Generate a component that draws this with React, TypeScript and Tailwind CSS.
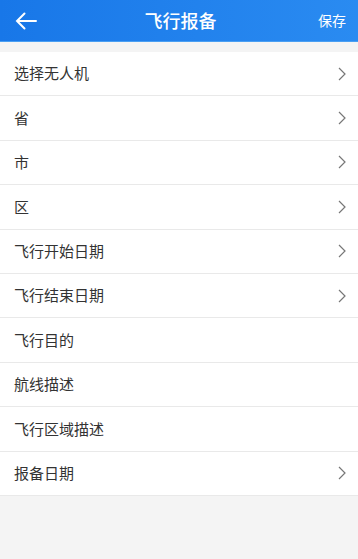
const rows = [
  { label: "选择无人机", arrow: true },
  { label: "省", arrow: true },
  { label: "市", arrow: true },
  { label: "区", arrow: true },
  { label: "飞行开始日期", arrow: true },
  { label: "飞行结束日期", arrow: true },
  { label: "飞行目的", arrow: false },
  { label: "航线描述", arrow: false },
  { label: "飞行区域描述", arrow: false },
  { label: "报备日期", arrow: true },
];

function Chevron() {
  return (
    <svg width="8" height="14" viewBox="0 0 8 14" fill="none">
      <path d="M1 1l6 6-6 6" stroke="#777" strokeWidth="1.2" strokeLinejoin="miter" />
    </svg>
  );
}

export default function App() {
  return (
    <div
      className="flex h-[559px] w-[358px] flex-col bg-[#f4f4f4]"
      style={{ fontFamily: '"Noto Sans CJK SC", "Noto Sans", sans-serif' }}
    >
      <header className="grid h-[42px] shrink-0 grid-cols-[1fr_auto_1fr] items-center border-b border-[#4a9ff2] bg-[linear-gradient(90deg,#1877e8_0%,#2a8bf1_100%)] pl-[15px] pr-[12px] text-white">
        <svg width="22" height="18" viewBox="0 0 22 18" fill="none">
          <path d="M21 9H2M9.5 1.5L2 9l7.5 7.5" stroke="white" strokeWidth="2" strokeLinecap="round" />
        </svg>
        <div className="text-[18px] font-medium">飞行报备</div>
        <div className="justify-self-end text-[14px]">保存</div>
      </header>

      <div className="mt-[10px] bg-white">
        {rows.map((row) => (
          <div
            key={row.label}
            className="flex h-[44.4px] items-center justify-between border-b border-[#e9e9e9] pl-[14px] pr-[12px]"
          >
            <span className="text-[15px] text-[#333]">{row.label}</span>
            {row.arrow && <Chevron />}
          </div>
        ))}
      </div>
    </div>
  );
}
